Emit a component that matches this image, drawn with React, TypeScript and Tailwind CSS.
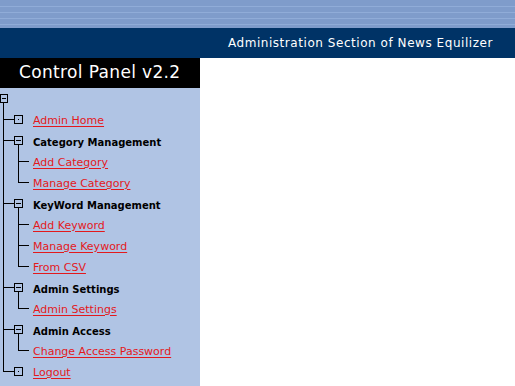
import React from "react";

type Kind = "root" | "leaf" | "section" | "child";

type Row = {
  kind: Kind;
  label?: string;
  last?: boolean; // last child of a section, or last top-level item
};

const rows: Row[] = [
  { kind: "root" },
  { kind: "leaf", label: "Admin Home" },
  { kind: "section", label: "Category Management" },
  { kind: "child", label: "Add Category" },
  { kind: "child", label: "Manage Category", last: true },
  { kind: "section", label: "KeyWord Management" },
  { kind: "child", label: "Add Keyword" },
  { kind: "child", label: "Manage Keyword" },
  { kind: "child", label: "From CSV", last: true },
  { kind: "section", label: "Admin Settings" },
  { kind: "child", label: "Admin Settings", last: true },
  { kind: "section", label: "Admin Access" },
  { kind: "child", label: "Change Access Password", last: true },
  { kind: "leaf", label: "Logout", last: true },
];

const Connector = ({ row }: { row: Row }) => {
  const s = "#000";
  if (row.kind === "root") {
    return (
      <svg width="33" height="21" className="shrink-0">
        <rect x="0.5" y="6.5" width="7" height="8" fill="none" stroke={s} />
        <line x1="2" y1="10.5" x2="6" y2="10.5" stroke={s} />
        <line x1="3.5" y1="15" x2="3.5" y2="21" stroke={s} />
      </svg>
    );
  }
  if (row.kind === "child") {
    return (
      <svg width="33" height="21" className="shrink-0">
        <line x1="3.5" y1="0" x2="3.5" y2="21" stroke={s} />
        <line x1="18.5" y1="0" x2="18.5" y2={row.last ? 11 : 21} stroke={s} />
        <line x1="18" y1="10.5" x2="29" y2="10.5" stroke={s} />
      </svg>
    );
  }
  return (
    <svg width="33" height="21" className="shrink-0">
      <line x1="3.5" y1="0" x2="3.5" y2={row.last ? 11 : 21} stroke={s} />
      <line x1="3" y1="10.5" x2="14" y2="10.5" stroke={s} />
      <rect x="14.5" y="6.5" width="8" height="8" fill="none" stroke={s} />
      {row.kind === "leaf" ? (
        <rect x="18" y="10" width="1" height="1" fill={s} />
      ) : (
        <>
          <line x1="16" y1="10.5" x2="21" y2="10.5" stroke={s} />
          <line x1="18.5" y1="15" x2="18.5" y2="21" stroke={s} />
        </>
      )}
    </svg>
  );
};

export default function App() {
  return (
    <div className="w-[515px] h-[386px] overflow-hidden bg-white flex flex-col font-['DejaVu_Sans',Verdana,sans-serif]">
      {/* striped top band */}
      <div className="h-[28px] bg-[#7f9ccb] flex flex-col pt-[6px] gap-[5px]">
        <div className="h-px bg-[#90acd8]" />
        <div className="h-px bg-[#90acd8]" />
        <div className="h-px bg-[#90acd8]" />
        <div className="h-px bg-[#90acd8]" />
      </div>

      {/* title bar */}
      <div className="h-[30px] bg-[#003366] flex items-center justify-end pr-[22px]">
        <span className="text-white text-[12px] tracking-[0.55px]">
          Administration Section of News Equilizer
        </span>
      </div>

      <div className="flex flex-1">
        {/* sidebar */}
        <div className="w-[200px] flex flex-col">
          <div className="h-[30px] bg-black flex items-center pl-[19px]">
            <span className="text-white text-[17px] tracking-[0.35px]">Control Panel v2.2</span>
          </div>
          <div className="flex-1 bg-[#b0c4e4] flex flex-col">
            {rows.map((row, i) => (
              <div key={i} className="h-[21px] flex items-center">
                <Connector row={row} />
                {row.label &&
                  (row.kind === "section" ? (
                    <span className="text-[10px] font-bold text-black whitespace-nowrap pt-[3px]">
                      {row.label}
                    </span>
                  ) : (
                    <a
                      href="#"
                      className="text-[11px] text-[#e3191c] underline underline-offset-2 whitespace-nowrap pt-[3px]"
                    >
                      {row.label}
                    </a>
                  ))}
              </div>
            ))}
          </div>
        </div>
        <div className="flex-1 bg-white" />
      </div>
    </div>
  );
}
